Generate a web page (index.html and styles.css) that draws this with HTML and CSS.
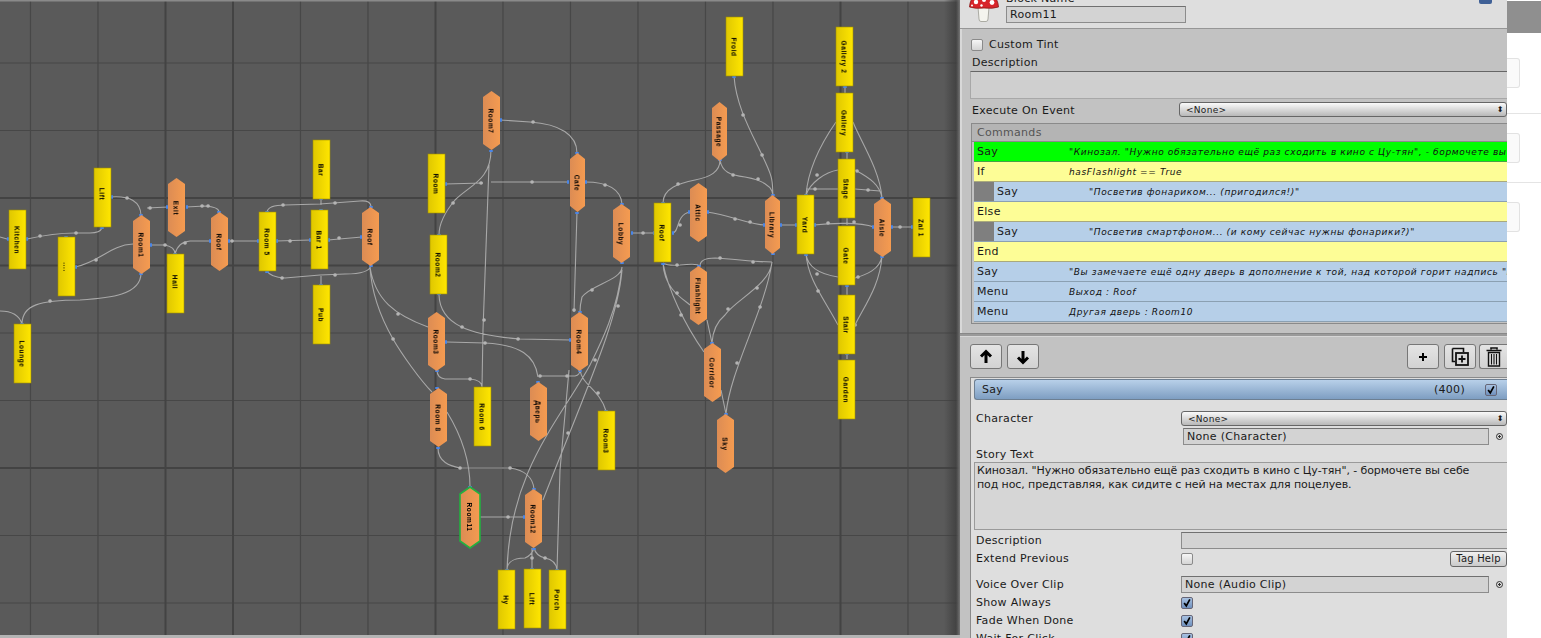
FILE: index.html
```html
<!DOCTYPE html>
<html lang="ru">
<head>
<meta charset="utf-8">
<title>Flowchart</title>
<link rel="stylesheet" href="styles.css">
</head>
<body>
<main class="app">
  <section class="canvas">
    <svg class="graph" width="960" height="635" viewBox="0 0 960 635">
      <defs>
        <linearGradient id="gy" x1="0" x2="1" y1="0" y2="0"><stop offset="0" stop-color="#dfc700"/><stop offset="1" stop-color="#ffe600"/></linearGradient>
        <linearGradient id="go" x1="0" x2="1" y1="0" y2="0"><stop offset="0" stop-color="#dc8c54"/><stop offset="1" stop-color="#f59b50"/></linearGradient>
        <linearGradient id="shade" x1="0" x2="1" y1="0" y2="0"><stop offset="0" stop-color="#3c3c3c" stop-opacity="0"/><stop offset=".75" stop-color="#3c3c3c" stop-opacity=".75"/><stop offset="1" stop-color="#777"/></linearGradient>
        <rect id="y" width="17" height="59" fill="url(#gy)" stroke="#a09000" stroke-width=".6"/>
        <path id="o" d="M0 6L8.5 0L17 6V53L8.5 59L0 53Z" fill="url(#go)"/>
        <path id="on" d="M0 6L7.5 0L15 6V53L7.5 59L0 53Z" fill="url(#go)"/>
        <path id="os" d="M0 7L10 0L20 7V54L10 61L0 54Z" fill="url(#go)" stroke="#22b040" stroke-width="1.6"/>
      </defs>
      <rect class="bg" width="960" height="635"/>
      <path class="grid" d="M30.5 0V635M98 0V635M300.5 0V635M368 0V635M503 0V635M570.5 0V635M638 0V635M705.5 0V635M773 0V635M908 0V635M0 63H960M0 130.5H960M0 333H960M0 400.5H960M0 535.5H960M0 603H960"/>
      <path class="grid-major" d="M165.5 0V635M233 0V635M435.5 0V635M840.5 0V635M0 198H960M0 265.5H960M0 468H960"/>
      <rect class="top-edge" width="960" height="1.5"/>
      <rect x="944" width="16" height="635" fill="url(#shade)"/>
      <path class="edges" d="M0 237L7 239M27 239C45 235 60 233 75 233L90 233Q100 233 102 228M111 197Q140 195 141 215M147 208L168 207M186 207L205 206Q219 207 219 212M75 267C100 262 110 245 133 244M150 245L165 245Q175 247 175 254M175 254Q178 242 190 241L211 241M228 241L259 241M276 241L311 240M328 240L362 237M141 273C141 295 110 298 80 300C40 300 22 305 22 324M0 311Q18 311 22 324M267 212Q268 205 285 205L320 204L360 201Q371 200 371 207M321 198V205M267 271Q270 277 285 278L320 275L345 274Q370 274 371 265M321 285V276M370 267C375 300 395 315 428 327M370 267C372 300 385 325 393 339S420 380 432 392M491 150C491 180 470 185 455 200C445 212 439 225 439 235M445 184L483 183M491 182L569 182M500 120L530 122C560 124 577 135 577 153M585 182Q620 182 622 204M489 165L483 330L482 387M577 212L574 312M622 267C622 280 590 285 582 297Q580 305 580 312M622 267C618 310 600 345 590 365C560 420 510 470 507 570M622 270C618 320 590 380 543 500M580 370C582 385 600 390 606 411M569 370L560 470L557 570M439 295C440 325 470 335 520 339L571 340M447 342L485 343C520 345 535 355 538 377M540 376L575 376Q580 375 580 370M437 370Q437 378 445 379L470 379Q482 380 482 387M447 412C458 430 470 455 470 487M438 448C438 462 450 466 460 468L510 468C525 470 533 478 534 489M480 517L525 517M534 548Q532 555 525 558C510 558 507 565 507 570M532 548V569M534 548Q536 556 545 558Q556 560 557 570M631 233L655 233M672 233C680 233 675 215 690 212M663 203C663 188 680 183 695 180C710 177 720 172 720 160M720 160C722 172 730 175 745 177C762 180 772 185 773 195M734 76C736 105 750 130 762 155S772 180 773 195M707 212C730 215 750 225 765 225M780 225L797 225M814 225C830 223 860 222 874 227M891 227L913 227M806 195C808 170 820 145 836 122M882 198C880 170 860 140 853 122M806 195C810 183 825 172 838 170M882 198C880 185 870 178 855 170M806 189L838 189M855 189L880 191M845 86V93M847 151V159M847 218V225M847 285V295M847 353V359M806 254C808 270 825 275 838 277M882 256C880 270 865 275 855 278M806 254C808 280 825 300 838 325M882 256C880 285 865 305 855 325M663 263Q668 266 680 265Q698 263 700 266M700 266Q700 258 715 258C735 259 755 262 772 262M663 263C664 290 685 300 690 305M663 263C668 290 685 325 704 352M772 262C770 285 735 300 725 315Q713 325 712 343M772 262C765 310 730 370 726 414M707 320L712 343M721 390L726 414"/>
      <path class="dots" d="M40 236h.1M76 233h.1M127 198h.1M150 208h.1M202 206h.1M208 206h.1M96 260h.1M165 245h.1M185 243h.1M232 241h.1M290 241h.1M339 238h.1M50 301h.1M283 205h.1M335 203h.1M282 278h.1M335 275h.1M398 314h.1M393 339h.1M481 183h.1M532 182h.1M533 122h.1M605 185h.1M453 203h.1M484 320h.1M462 327h.1M518 339h.1M485 343h.1M540 376h.1M567 376h.1M470 379h.1M460 468h.1M510 468h.1M508 517h.1M532 558h.1M545 558h.1M592 290h.1M618 306h.1M595 360h.1M568 433h.1M574 310h.1M598 393h.1M643 233h.1M680 225h.1M678 184h.1M733 175h.1M758 179h.1M743 115h.1M762 155h.1M735 219h.1M750 222h.1M828 223h.1M854 222h.1M900 227h.1M817 175h.1M857 171h.1M815 189h.1M868 190h.1M817 274h.1M858 277h.1M818 291h.1M855 325h.1M677 265h.1M720 258h.1M753 262h.1M677 293h.1M681 315h.1M757 288h.1M728 309h.1M760 307h.1M737 363h.1"/>
      <path class="ports" d="M7 239h2M26 239h2M66 236v2M75 267h2M102 227v2M111 197h2M133 244h2M150 245h2M141 214v2M141 273v2M166 207h2M186 207h2M209 241h2M228 241h2M219 211v2M175 253v2M22 323v2M257 241h2M276 241h2M267 211v2M267 271v2M321 198v2M321 209v1M309 240h2M328 240h2M321 284v2M360 237h2M371 206v2M371 265v2M500 120h2M491 150v2M445 184h2M439 234v2M439 293v2M567 182h2M585 182h2M577 152v2M577 212v2M622 203v2M622 262v2M631 233h2M653 233h2M672 233h2M663 202v2M663 263v2M580 311v2M569 340h2M445 342h2M437 370v2M437 387v2M438 447v2M538 381v2M580 370v2M606 410v2M470 486v2M523 517h2M534 488v2M534 548v2M507 569v2M532 568v2M557 569v2M720 159v2M734 76v2M688 212h2M707 212h2M773 194v2M773 253v2M763 225h2M780 225h2M795 225h2M814 225h2M806 194v2M806 254v2M872 227h2M891 227h2M882 197v2M882 256v2M911 227h2M845 86v2M847 151v2M847 285v2M847 353v2M699 265v2M712 342v2M726 413v2"/>
      <g class="nodes">
        <g transform="translate(9 210)"><use href="#y"/><text transform="translate(8.5 30) rotate(90)">Kitchen</text></g>
        <g transform="translate(58 237)"><use href="#y"/><text transform="translate(8.5 30) rotate(90)">....</text></g>
        <g transform="translate(94 168)"><use href="#y"/><text transform="translate(8.5 26) rotate(90)">Lift</text></g>
        <g transform="translate(14 324)"><use href="#y"/><text transform="translate(8.5 30) rotate(90)">Lounge</text></g>
        <g transform="translate(167 254)"><use href="#y"/><text transform="translate(8.5 28) rotate(90)">Hall</text></g>
        <g transform="translate(259 212)"><use href="#y"/><text transform="translate(8.5 30) rotate(90)">Room 5</text></g>
        <g transform="translate(311 210)"><use href="#y"/><text transform="translate(8.5 30) rotate(90)">Bar 1</text></g>
        <g transform="translate(313 140)"><use href="#y"/><text transform="translate(8.5 30) rotate(90)">Bar</text></g>
        <g transform="translate(313 285)"><use href="#y"/><text transform="translate(8.5 30) rotate(90)">Pub</text></g>
        <g transform="translate(133 215)"><use href="#o"/><text transform="translate(8.5 30) rotate(90)">Room1</text></g>
        <g transform="translate(168 178)"><use href="#o"/><text transform="translate(8.5 30) rotate(90)">Exit</text></g>
        <g transform="translate(211 212)"><use href="#o"/><text transform="translate(8.5 30) rotate(90)">Roof</text></g>
        <g transform="translate(362 207)"><use href="#o"/><text transform="translate(8.5 30) rotate(90)">Roof</text></g>
        <g transform="translate(483 91)"><use href="#o"/><text transform="translate(8.5 30) rotate(90)">Room7</text></g>
        <g transform="translate(428 154)"><use href="#y"/><text transform="translate(8.5 30) rotate(90)">Room</text></g>
        <g transform="translate(430 235)"><use href="#y"/><text transform="translate(8.5 30) rotate(90)">Room2</text></g>
        <g transform="translate(570 153)"><use href="#on"/><text transform="translate(7.5 30) rotate(90)">Cafe</text></g>
        <g transform="translate(613 204)"><use href="#o"/><text transform="translate(8.5 30) rotate(90)">Lobby</text></g>
        <g transform="translate(654 203)"><use href="#y"/><text transform="translate(8.5 30) rotate(90)">Roof</text></g>
        <g transform="translate(428 312)"><use href="#o"/><text transform="translate(8.5 30) rotate(90)">Room3</text></g>
        <g transform="translate(571 312)"><use href="#o"/><text transform="translate(8.5 30) rotate(90)">Room4</text></g>
        <g transform="translate(430 388)"><use href="#o"/><text transform="translate(8.5 30) rotate(90)">Room 8</text></g>
        <g transform="translate(474 387)"><use href="#y"/><text transform="translate(8.5 30) rotate(90)">Room 6</text></g>
        <g transform="translate(530 382)"><use href="#o"/><text transform="translate(8.5 30) rotate(90)">Дверь</text></g>
        <g transform="translate(598 411)"><use href="#y"/><text transform="translate(8.5 30) rotate(90)">Room3</text></g>
        <g transform="translate(460 487)"><use href="#os"/><text transform="translate(10 30) rotate(90)">Room11</text></g>
        <g transform="translate(525 489)"><use href="#o"/><text transform="translate(8.5 30) rotate(90)">Room12</text></g>
        <g transform="translate(498 570)"><use href="#y"/><text transform="translate(8.5 30) rotate(90)">Ну</text></g>
        <g transform="translate(524 569)"><use href="#y"/><text transform="translate(8.5 30) rotate(90)">Lift</text></g>
        <g transform="translate(549 570)"><use href="#y"/><text transform="translate(8.5 30) rotate(90)">Porch</text></g>
        <g transform="translate(726 17)"><use href="#y"/><text transform="translate(8.5 30) rotate(90)">Froid</text></g>
        <g transform="translate(836 27)"><use href="#y"/><text transform="translate(8.5 30) rotate(90)">Gallery 2</text></g>
        <g transform="translate(836 93)"><use href="#y"/><text transform="translate(8.5 30) rotate(90)">Gallery</text></g>
        <g transform="translate(838 159)"><use href="#y"/><text transform="translate(8.5 30) rotate(90)">Stage</text></g>
        <g transform="translate(838 226)"><use href="#y"/><text transform="translate(8.5 30) rotate(90)">Gate</text></g>
        <g transform="translate(838 295)"><use href="#y"/><text transform="translate(8.5 30) rotate(90)">Stair</text></g>
        <g transform="translate(838 360)"><use href="#y"/><text transform="translate(8.5 30) rotate(90)">Garden</text></g>
        <g transform="translate(712 102)"><use href="#on"/><text transform="translate(7.5 30) rotate(90)">Passage</text></g>
        <g transform="translate(690 183)"><use href="#o"/><text transform="translate(8.5 30) rotate(90)">Attic</text></g>
        <g transform="translate(765 195)"><use href="#on"/><text transform="translate(7.5 30) rotate(90)">Library</text></g>
        <g transform="translate(797 195)"><use href="#y"/><text transform="translate(8.5 30) rotate(90)">Yard</text></g>
        <g transform="translate(874 198)"><use href="#o"/><text transform="translate(8.5 30) rotate(90)">Aisle</text></g>
        <g transform="translate(913 198)"><use href="#y"/><text transform="translate(8.5 30) rotate(90)">Zal 1</text></g>
        <g transform="translate(690 266)"><use href="#o"/><text transform="translate(8.5 30) rotate(90)">Flashlight</text></g>
        <g transform="translate(704 343)"><use href="#o"/><text transform="translate(8.5 30) rotate(90)">Corridor</text></g>
        <g transform="translate(717 414)"><use href="#o"/><text transform="translate(8.5 30) rotate(90)">Sky</text></g>
      </g>
    </svg>
  </section>

  <aside class="panel">
    <header class="block-head">
      <svg class="mushroom" width="31" height="23" viewBox="0 0 31 23">
        <path d="M9 7H20L19 19Q19 21.500 17 21.500H12Q10 21.500 10 19Z" fill="#f4f4ee" stroke="#9a9a92" stroke-width=".8"/>
        <path d="M0.500 7Q1 -1 6 -4H24Q29 -1 29.500 7Q24 9 15 8Q6 9 0.500 7Z" fill="#d8242a" stroke="#8a1616" stroke-width=".8"/>
        <circle cx="7" cy="2" r="2.200" fill="#fff"/>
        <circle cx="15" cy="0" r="2" fill="#fff"/>
        <circle cx="23" cy="2.500" r="2.400" fill="#fff"/>
        <circle cx="12.500" cy="5.500" r="1.200" fill="#fff"/>
        <circle cx="3" cy="5.500" r="1" fill="#fff"/>
      </svg>
      <div class="name-col">
        <div class="name-label">Block Name</div>
        <div class="field name-field">Room11</div>
      </div>
      <span class="head-icon"></span>
    </header>

    <div class="block-body">
      <label class="tint"><span class="check"></span>Custom Tint</label>
      <div class="desc-label">Description</div>
      <div class="desc-box"></div>
      <div class="event-row">
        <span class="event-label">Execute On Event</span>
        <div class="select event-select"><span>&lt;None&gt;</span><span class="updown">⬍</span></div>
      </div>
      <div class="commands">
        <div class="commands-title">Commands</div>
        <div class="cmd green"><span class="cmd-name">Say</span><span class="cmd-text">"Кинозал. "Нужно обязательно ещё раз сходить в кино с Цу-тян", - бормочете вы себе под нос</span></div>
        <div class="cmd yellow"><span class="cmd-name">If</span><span class="cmd-text">hasFlashlight == True</span></div>
        <div class="cmd blue"><span class="indent"></span><span class="cmd-name">Say</span><span class="cmd-text">"Посветив фонариком... (пригодился!)"</span></div>
        <div class="cmd yellow"><span class="cmd-name">Else</span></div>
        <div class="cmd blue"><span class="indent"></span><span class="cmd-name">Say</span><span class="cmd-text">"Посветив смартфоном... (и кому сейчас нужны фонарики?)"</span></div>
        <div class="cmd yellow"><span class="cmd-name">End</span></div>
        <div class="cmd blue"><span class="cmd-name">Say</span><span class="cmd-text">"Вы замечаете ещё одну дверь в дополнение к той, над которой горит надпись "Выход"</span></div>
        <div class="cmd blue"><span class="cmd-name">Menu</span><span class="cmd-text">Выход : Roof</span></div>
        <div class="cmd blue"><span class="cmd-name">Menu</span><span class="cmd-text">Другая дверь : Room10</span></div>
      </div>
    </div>

    <div class="splitter"></div>

    <div class="toolbar">
      <button class="tool" type="button"><svg width="18" height="18" viewBox="0 0 18 18"><path d="M9 15V4M4 8.500L9 3.500L14 8.500" fill="none" stroke="#000" stroke-width="3"/></svg></button>
      <button class="tool" type="button"><svg width="18" height="18" viewBox="0 0 18 18"><path d="M9 3V14M4 9.500L9 14.500L14 9.500" fill="none" stroke="#000" stroke-width="3"/></svg></button>
      <span class="spacer"></span>
      <button class="tool" type="button"><svg width="12" height="12" viewBox="0 0 12 12"><path d="M6 2V10M2 6H10" fill="none" stroke="#000" stroke-width="2"/></svg></button>
      <button class="tool" type="button"><svg width="20" height="20" viewBox="0 0 20 20"><path d="M2.500 1.500H13.500V5M5 14.500H2.500V1.500" fill="none" stroke="#111" stroke-width="1.600"/><rect x="6" y="6" width="12" height="12" fill="#d8d8d8" stroke="#111" stroke-width="1.800"/><path d="M12 8.500V15.500M8.500 12H15.500" stroke="#111" stroke-width="1.800"/></svg></button>
      <button class="tool trash" type="button"><svg width="18" height="20" viewBox="0 0 18 20"><path d="M6 2.500V1H12V2.500M1.500 3.500H16.500" fill="none" stroke="#111" stroke-width="1.600"/><path d="M3.500 5.500H14.500V19H3.500Z" fill="#ddd" stroke="#111" stroke-width="1.400"/><path d="M6.500 7V17.500M9 7V17.500M11.500 7V17.500" stroke="#111" stroke-width="1.100"/></svg></button>
    </div>

    <section class="inspector">
      <div class="say-bar"><span>Say</span><span class="say-index">(400)</span><span class="check on"><svg width="14" height="14" viewBox="0 0 14 14"><path d="M3 7L6 11L11 2" fill="none" stroke="#000" stroke-width="2.400"/></svg></span></div>
      <div class="row character-row"><span class="row-label">Character</span><div class="select"><span>&lt;None&gt;</span><span class="updown">⬍</span></div></div>
      <div class="row object-row"><span class="row-label"></span><div class="field obj">None (Character)</div><span class="target"></span></div>
      <div class="story-label">Story Text</div>
      <div class="story">Кинозал. "Нужно обязательно ещё раз сходить в кино с Цу-тян", - бормочете вы себе под нос, представляя, как сидите с ней на местах для поцелуев.</div>
      <div class="row desc-row"><span class="row-label">Description</span><div class="field wide"></div></div>
      <div class="row extend-row"><span class="row-label">Extend Previous</span><span class="check"></span><span class="spacer"></span><button class="tag" type="button">Tag Help</button></div>
      <div class="row voice-row"><span class="row-label">Voice Over Clip</span><div class="field obj">None (Audio Clip)</div><span class="target"></span></div>
      <div class="row tick-row"><span class="row-label">Show Always</span><span class="check on"><svg width="14" height="14" viewBox="0 0 14 14"><path d="M3 7L6 11L11 2" fill="none" stroke="#000" stroke-width="2.400"/></svg></span></div>
      <div class="row tick-row"><span class="row-label">Fade When Done</span><span class="check on"><svg width="14" height="14" viewBox="0 0 14 14"><path d="M3 7L6 11L11 2" fill="none" stroke="#000" stroke-width="2.400"/></svg></span></div>
      <div class="row tick-row"><span class="row-label">Wait For Click</span><span class="check on"><svg width="14" height="14" viewBox="0 0 14 14"><path d="M3 7L6 11L11 2" fill="none" stroke="#000" stroke-width="2.400"/></svg></span></div>
    </section>
  </aside>

  <div class="behind">
    <div class="behind-bar"></div>
    <div class="behind-box first"></div>
    <div class="behind-line l1"></div>
    <div class="behind-box second"></div>
    <div class="behind-line l2"></div>
    <div class="behind-box third"></div>
  </div>
</main>
</body>
</html>
```
FILE: styles.css
```css
* { box-sizing: border-box; }
html, body { margin: 0; height: 638px; overflow: hidden; background: #fff; }
body { font: 11px/14px "DejaVu Sans", "Noto Sans CJK SC", sans-serif; letter-spacing: .3px; color: #1a1a1a; }

.app { display: flex; width: 1541px; height: 638px; overflow: hidden; }

/* Node graph */
.canvas { flex: 0 0 960px; height: 638px; background: #b4b4b4; }
.graph { display: block; filter: blur(0.45px); }
.bg { fill: #5a5a5a; }
.top-edge { fill: #8a8a8a; }
.grid { fill: none; stroke: #474747; stroke-width: 1.2; }
.grid-major { fill: none; stroke: #434343; stroke-width: 2; }
.edges { fill: none; stroke: #a8a8a8; stroke-width: 1.1; }
.dots { fill: none; stroke: #b4b4b4; stroke-width: 3.6; stroke-linecap: round; }
.ports { fill: none; stroke: #4a86e8; stroke-width: 3.5; }
.nodes text { font: bold 6.5px "Liberation Sans", "Noto Sans CJK SC", sans-serif; letter-spacing: .6px; fill: #000; text-anchor: middle; dominant-baseline: central; filter: blur(.35px); }

/* Inspector */
.panel { flex: 0 0 547px; height: 638px; display: flex; flex-direction: column; overflow: hidden; background: #c2c2c2; position: relative; }
.block-head { flex: 0 0 29px; display: flex; gap: 6px; padding-left: 9px; background: #dedede; border-bottom: 1px solid #969696; overflow: hidden; position: relative; }
.mushroom { flex: none; }
.name-col { display: flex; flex-direction: column; margin-top: -8px; }
.name-label { height: 14px; }
.field { background: #d3d3d3; border: 1px solid #8c8c8c; border-top-color: #707070; padding-left: 3px; height: 17px; line-height: 15px; }
.name-field { width: 180px; }
.head-icon { position: absolute; left: 519px; top: -6px; width: 13px; height: 10px; background: #3f6096; border-radius: 2px; }

.block-body { flex: 0 0 304px; border-left: 2px solid #d8d8d8; padding: 9px 0 0 9px; display: flex; flex-direction: column; }
.tint { display: flex; align-items: center; gap: 6px; height: 13px; }
.check { width: 12px; height: 12px; flex: none; display: inline-flex; align-items: center; justify-content: center; border: 1px solid #8a8a8a; border-radius: 2px; background: linear-gradient(#f6f6f6, #d4d4d4); }
.check.on { background: linear-gradient(#a8c2e2, #6f90bd); border-color: #667; }
.desc-label { margin-top: 5px; height: 14px; margin-left: 1px; }
.desc-box { height: 28px; margin-left: -1px; margin-top: 1px; background: #cfcfcf; border: 1px solid #a8a8a8; border-top-color: #666; border-right: 0; }
.event-row { display: flex; align-items: center; margin-top: 3px; height: 15px; margin-left: 1px; }
.event-label { flex: 0 0 207px; padding-top: 2px; }
.select { flex: 1; height: 15px; display: flex; justify-content: space-between; align-items: center; padding: 0 2px 0 6px; font-size: 9px; letter-spacing: .3px; background: linear-gradient(#fafafa, #b8b8b8); border: 1px solid #666; border-radius: 3px; }
.updown { font-size: 8px; line-height: 10px; }
.commands { margin: 6px 0 0 0; height: 201px; border: 1px solid #8a8a8a; border-right: 0; padding: 0 0 0 2px; background: #c2c2c2; display: flex; flex-direction: column; }
.commands-title { height: 18px; margin-left: -2px; padding-left: 5px; line-height: 18px; background: #b4b4b4; color: #555; border-bottom: 1px solid #8a8a8a; }
.cmd { height: 20px; flex: none; display: flex; align-items: center; white-space: nowrap; overflow: hidden; border-bottom: 1px solid #8ba0b2; }
.cmd.green { background: #00ff00; border-color: #47a047; }
.cmd.yellow { background: #fdfd96; border-color: #a9a97c; }
.cmd.blue { background: #b6cfe8; }
.cmd-name { flex: 0 0 95px; padding: 1px 0 0 3px; }
.indent { flex: 0 0 20px; align-self: stretch; background: #7f7f7f; }
.cmd-text { font-size: 9px; font-style: italic; letter-spacing: .63px; color: #111; padding-top: 1px; }

.splitter { flex: 0 0 4px; background: #9a9a9a; border-top: 1px solid #888; border-bottom: 1px solid #d6d6d6; }
.toolbar { flex: 0 0 40px; display: flex; gap: 5px; padding: 7px 0 0 10px; }
.tool { flex: 0 0 32px; height: 25px; padding: 0; display: flex; align-items: center; justify-content: center; background: linear-gradient(#e4e4e4, #d2d2d2); border: 1px solid #777; border-radius: 3px; }
.tool.trash { flex: 0 0 28px; margin-left: -2px; border-right: 0; border-radius: 3px 0 0 3px; }
.spacer { flex: 1; }

.inspector { flex: 1; margin-left: 10px; background: #dedede; border: 1px solid #8a8a8a; border-right: 0; border-bottom: 0; padding: 1px 0 0 3px; display: flex; flex-direction: column; }
.say-bar { flex: none; height: 21px; display: flex; align-items: center; padding: 0 10px 0 7px; background: linear-gradient(#b8d0e9, #7e9ec2); border: 1px solid #6d7f92; border-right: 0; border-radius: 3px 0 0 3px; }
.say-bar .say-index { margin-left: auto; margin-right: 20px; }
.row { flex: none; display: flex; align-items: center; padding-left: 2px; }
.row-label { flex: 0 0 205px; }
.character-row { height: 15px; margin-top: 11px; }
.object-row { height: 17px; margin-top: 2px; }
.field.obj { flex: 0 0 306px; margin-left: 2px; }
.voice-row .field.obj { margin-left: 0; flex: 0 0 308px; }
.target { flex: none; margin-left: 7px; width: 7px; height: 7px; border: 1px solid #333; border-radius: 50%; background: radial-gradient(#333 0 1px, transparent 1.2px); }
.story-label { flex: none; height: 14px; margin-top: 3px; padding-left: 2px; }
.story { flex: none; height: 68px; background: #d6d6d6; border: 1px solid #9a9a9a; border-right: 0; padding: 1px 28px 0 2px; line-height: 14px; letter-spacing: -.1px; }
.desc-row { height: 17px; margin-top: 2px; }
.field.wide { flex: 1; border-right: 0; }
.extend-row { height: 16px; margin-top: 2px; }
.tag { flex: 0 0 57px; height: 16px; padding: 0; font: 10px/12px "DejaVu Sans", sans-serif; letter-spacing: .2px; color: #1a1a1a; background: linear-gradient(#f0f0f0, #cacaca); border: 1px solid #666; border-radius: 3px; }
.voice-row { height: 17px; margin-top: 9px; margin-bottom: 1px; }
.tick-row { height: 18px; }

/* Page behind the window */
.behind { flex: 1; height: 638px; display: flex; flex-direction: column; overflow: hidden; background: #fff; }
.behind-bar { flex: 0 0 32px; margin-top: 1px; background: #8f8f8f; }
.behind-box { flex: 0 0 30px; width: 13px; background: #fafafa; border: 1px solid #e2e2e2; border-left: 0; border-radius: 0 3px 3px 0; }
.behind-box.first { margin-top: 25px; }
.behind-line { flex: 0 0 1px; background: #e4e4e4; }
.behind-line.l1 { margin-top: 25px; }
.behind-box.second { margin-top: 19px; }
.behind-line.l2 { margin-top: 19px; }
.behind-box.third { margin-top: 19px; }
```
